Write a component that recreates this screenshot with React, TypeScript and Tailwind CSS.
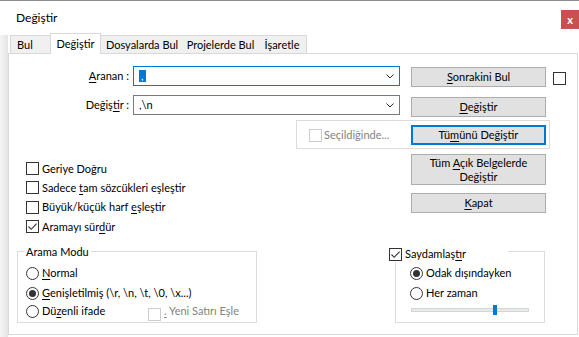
import React from 'react';

function Check({ checked = false, disabled = false }: { checked?: boolean; disabled?: boolean }) {
  return (
    <span
      className={`flex h-[13px] w-[13px] shrink-0 items-center justify-center border bg-white ${
        disabled ? 'border-[#cccccc]' : 'border-[#333333]'
      }`}
    >
      {checked && (
        <svg width="11" height="11" viewBox="0 0 11 11">
          <path d="M1.5 5.5 L4.2 8.3 L9.6 2.6" fill="none" stroke="#333" strokeWidth="1.1" />
        </svg>
      )}
    </span>
  );
}

function Radio({ on = false }: { on?: boolean }) {
  return (
    <span className="flex h-[13px] w-[13px] shrink-0 items-center justify-center rounded-full border border-[#333333] bg-white">
      {on && <span className="h-[7px] w-[7px] rounded-full bg-[#333333]" />}
    </span>
  );
}

function Btn({ children, className = '' }: { children: React.ReactNode; className?: string }) {
  return (
    <div
      className={`flex w-[135px] shrink-0 items-center justify-center border border-[#adadad] bg-[#e1e1e1] text-center leading-[14px] ${className}`}
    >
      {children}
    </div>
  );
}

function U({ children }: { children: React.ReactNode }) {
  return <span className="underline decoration-1 underline-offset-[2px]">{children}</span>;
}

function Chevron() {
  return (
    <svg width="8" height="5" viewBox="0 0 8 5">
      <path d="M0.5 0.5 L4 4 L7.5 0.5" fill="none" stroke="#333" strokeWidth="1" />
    </svg>
  );
}

const tabs = [
  { label: 'Bul', w: 'w-[40px] justify-start pl-[6px] border-l' },
  { label: 'Değiştir', w: 'w-[51px]', active: true },
  { label: 'Dosyalarda Bul', w: 'w-[82px] justify-center' },
  { label: 'Projelerde Bul', w: 'w-[75px] justify-center' },
  { label: 'İşaretle', w: 'w-[49px] justify-center border-r' },
];

export default function App() {
  return (
    <div className="h-[337px] w-[579px] overflow-hidden border-t border-[#8c8c8c] bg-white font-['Lato',sans-serif] text-[11px] leading-[16px] text-black">
      {/* title bar */}
      <div className="flex h-[32px] items-start justify-between">
        <span className="ml-[16px] mt-[9px] text-[12px]">Değiştir</span>
        <div className="mt-[9px] flex h-[19px] w-[18px] items-center justify-center bg-[#c75050] text-[11px] font-bold text-white">
          x
        </div>
      </div>

      <div className="flex h-[304px]">
        <div className="mt-[2px] w-[8px] bg-gradient-to-r from-[#f5f5f5] to-[#e4e4e4]" />

        <div className="flex w-[570px] flex-col">
          {/* tabs */}
          <div className="flex h-[20px] items-end whitespace-nowrap pl-[2px]">
            {tabs.map((t) =>
              t.active ? (
                <div
                  key={t.label}
                  className={`relative z-10 -mb-px flex h-[21px] ${t.w} items-start justify-center border-l border-r border-t border-[#d9d9d9] bg-white pt-[2px]`}
                >
                  {t.label}
                </div>
              ) : (
                <div
                  key={t.label}
                  className={`flex h-[18px] ${t.w} items-center border-t border-[#d9d9d9] bg-[#f0f0f0]`}
                >
                  {t.label}
                </div>
              ),
            )}
          </div>

          {/* panel */}
          <div className="flex h-[282px] flex-col whitespace-nowrap border border-[#d9d9d9]">
            {/* row 1 */}
            <div className="mt-[12px] flex h-[21px] items-start">
              <div className="w-[120px] text-right leading-[20px]">
                <U>A</U>ranan :
              </div>
              <div className="ml-[4px] flex h-[20px] w-[267px] items-center justify-between border border-[#0078d7] pl-[5px] pr-[5px]">
                <span className="bg-[#0078d7] px-[2px] leading-[12px] text-white">,</span>
                <Chevron />
              </div>
              <Btn className="ml-[11px] mt-[1px] h-[20px]">
                <span>
                  <U>S</U>onrakini Bul
                </span>
              </Btn>
              <div className="ml-[7px] mt-[6px]">
                <Check />
              </div>
            </div>

            {/* row 2 */}
            <div className="mt-[8px] flex h-[22px] items-start">
              <div className="w-[120px] text-right leading-[20px]">
                Değiş<U>t</U>ir :
              </div>
              <div className="ml-[4px] flex h-[20px] w-[267px] items-center justify-between border border-[#7a7a7a] pl-[5px] pr-[5px]">
                <span>{',\\n'}</span>
                <Chevron />
              </div>
              <Btn className="ml-[11px] mt-[2px] h-[20px]">
                <span>
                  <U>D</U>eğiştir
                </span>
              </Btn>
            </div>

            {/* row 3: in selection */}
            <div className="ml-[287px] mt-[3px] flex h-[29px] w-[254px] items-start border border-[#dcdcdc] pl-[12px]">
              <div className="mt-[6px] flex w-[102px] items-center">
                <Check disabled />
                <span className="ml-[2px] text-[#838383]">Seçildiğinde...</span>
              </div>
              <div className="mt-[4px] flex h-[20px] w-[135px] items-center justify-center border-2 border-[#0078d7] bg-[#e1e1e1]">
                <span>
                  Tü<U>m</U>ünü Değiştir
                </span>
              </div>
            </div>

            {/* row 4 */}
            <div className="mt-[5px] flex h-[97px] items-start">
              <div className="ml-[17px] flex w-[385px] flex-col pt-[5px]">
                <div className="flex h-[19px] items-center">
                  <Check />
                  <span className="ml-[3px]">Geriye Doğru</span>
                </div>
                <div className="flex h-[19px] items-center">
                  <Check />
                  <span className="ml-[3px]">
                    Sadece <U>t</U>am sözcükleri eşleştir
                  </span>
                </div>
                <div className="flex h-[20px] items-center">
                  <Check />
                  <span className="ml-[3px]">
                    Büyük/küçük harf <U>e</U>şleştir
                  </span>
                </div>
                <div className="flex h-[19px] items-center">
                  <Check checked />
                  <span className="ml-[3px]">
                    Aramayı sür<U>d</U>ür
                  </span>
                </div>
              </div>
              <div className="flex flex-col gap-[8px]">
                <Btn className="h-[31px]">
                  <span>
                    Tüm <U>A</U>çık Belgelerde
                    <br />
                    Değiştir
                  </span>
                </Btn>
                <Btn className="h-[20px]">
                  <span>
                    <U>K</U>apat
                  </span>
                </Btn>
              </div>
            </div>

            {/* row 5: groups */}
            <div className="flex items-start">
              <div className="relative ml-[8px] h-[72px] w-[240px] border border-[#dcdcdc] pl-[8px] pt-[11px]">
                <span className="absolute left-[6px] top-[-8px] bg-white px-[2px]">Arama Modu</span>
                <div className="flex h-[20px] items-center">
                  <Radio />
                  <span className="ml-[3px]">
                    <U>N</U>ormal
                  </span>
                </div>
                <div className="flex h-[20px] items-center">
                  <Radio on />
                  <span className="ml-[3px]">
                    <U>G</U>
                    {'enişletilmiş (\\r, \\n, \\t, \\0, \\x...)'}
                  </span>
                </div>
                <div className="flex h-[16px] items-center">
                  <div className="flex w-[122px] items-center">
                    <Radio />
                    <span className="ml-[3px]">
                      Dü<U>z</U>enli ifade
                    </span>
                  </div>
                  <div className="mt-[6px]">
                    <Check disabled />
                  </div>
                  <span className="ml-[3px] text-[#838383]">
                    <U>.</U> Yeni Satırı Eşle
                  </span>
                </div>
              </div>

              <div className="relative ml-[138px] h-[72px] w-[150px] border border-[#dcdcdc] pl-[14px] pt-[11px]">
                <div className="absolute left-[-7px] top-[-6px] flex h-[16px] w-[119px] items-center bg-white">
                  <Check checked />
                  <span className="ml-[3px]">
                    Saydamlaş<U>t</U>ır
                  </span>
                </div>
                <div className="flex h-[20px] items-center">
                  <Radio on />
                  <span className="ml-[3px]">Odak dışındayken</span>
                </div>
                <div className="flex h-[20px] items-center">
                  <Radio />
                  <span className="ml-[3px]">Her zaman</span>
                </div>
                <div className="relative ml-[1px] mt-[5px] h-[4px] w-[118px] border border-[#d6d6d6] bg-[#e7eaea]">
                  <div className="absolute left-[81px] top-[-4px] h-[10px] w-[4px] bg-[#0078d7]" />
                </div>
              </div>
            </div>
          </div>
        </div>
      </div>
    </div>
  );
}
